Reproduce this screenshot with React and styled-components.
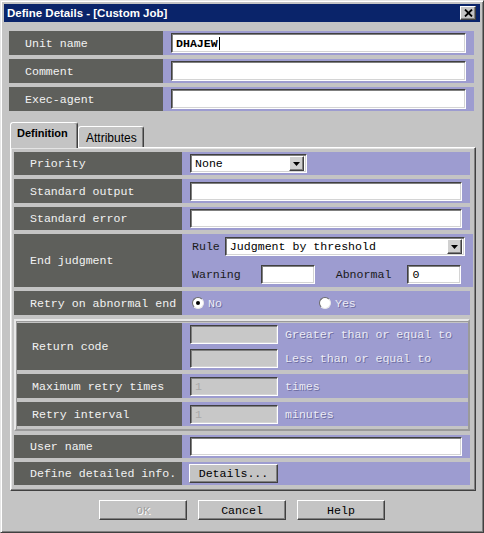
import React from 'react'
import styled, { createGlobalStyle } from 'styled-components'

const GlobalStyle = createGlobalStyle`
  html, body {
    margin: 0;
    padding: 0;
    background: #ffffff;
  }
`

const mono = `"Liberation Mono", "DejaVu Sans Mono", monospace`
const sans = `"Liberation Sans", Arial, sans-serif`

const Window = styled.div`
  width: 484px;
  height: 533px;
  box-sizing: border-box;
  background: #c4c4c4;
  border: 1px solid;
  border-color: #e6e6e6 #404040 #404040 #e6e6e6;
  box-shadow: inset 1px 1px 0 #ffffff, inset -1px -1px 0 #808080;
  padding: 3px;
  display: flex;
  flex-direction: column;
`

const TitleBar = styled.div`
  height: 18px;
  background: #0a246a;
  display: flex;
  align-items: center;
  justify-content: space-between;
  padding: 0 4px 0 3px;
  color: #ffffff;
  font-family: ${sans};
  font-weight: bold;
  font-size: 11.5px;
`

const CloseBox = styled.div`
  width: 16px;
  height: 14px;
  box-sizing: border-box;
  background: #c4c4c4;
  border: 1px solid;
  border-color: #ffffff #404040 #404040 #ffffff;
  box-shadow: inset -1px -1px 0 #808080;
  display: flex;
  align-items: center;
  justify-content: center;
`

const TopRows = styled.div`
  margin: 9px 6px 0 5px;
  display: flex;
  flex-direction: column;
  gap: 4px;
`

const Row = styled.div`
  display: grid;
  grid-template-columns: ${(p) => p.$label}px 1fr;
  height: ${(p) => p.$h || 23}px;
`

const Label = styled.div`
  background: #5e5f5b;
  color: #f2f2f2;
  font-family: ${mono};
  font-size: 11.6px;
  display: flex;
  align-items: center;
  padding-left: ${(p) => p.$pad || 16}px;
  white-space: nowrap;
`

const Value = styled.div`
  background: #9d9cd0;
  display: flex;
  align-items: center;
  padding: 0 8px;
  font-family: ${mono};
  font-size: 11.6px;
  color: #1a1a1a;
`

const Field = styled.div`
  box-sizing: border-box;
  height: ${(p) => p.$h || 19}px;
  width: ${(p) => (p.$w ? `${p.$w}px` : '100%')};
  flex: ${(p) => (p.$w ? 'none' : '1')};
  background: ${(p) => (p.$disabled ? '#c8c8c8' : '#ffffff')};
  border: 1px solid;
  border-color: #404040 #ffffff #ffffff #404040;
  box-shadow: inset 1px 1px 0 #808080, inset -1px -1px 0 #d4d4d4;
  font-family: ${mono};
  font-size: 11.6px;
  font-weight: ${(p) => (p.$bold ? 'bold' : 'normal')};
  color: ${(p) => (p.$disabled ? '#a8a8a8' : '#000000')};
  display: flex;
  align-items: center;
  padding-left: 4px;
  margin-left: ${(p) => p.$ml || 0}px;
  overflow: hidden;
  white-space: nowrap;
`

const Caret = styled.span`
  width: 1px;
  height: 13px;
  background: #000;
  margin-left: 1px;
`

const SelectBox = styled(Field)`
  padding-right: 2px;
  justify-content: space-between;
`

const ArrowBtn = styled.div`
  width: 15px;
  height: 15px;
  box-sizing: border-box;
  background: #d0d0d0;
  border: 1px solid;
  border-color: #ffffff #404040 #404040 #ffffff;
  box-shadow: inset -1px -1px 0 #808080;
  display: flex;
  align-items: center;
  justify-content: center;
`

const Tabs = styled.div`
  margin: 11px 0 0 6px;
  display: flex;
  align-items: flex-end;
  height: 25px;
`

const Tab = styled.div`
  box-sizing: border-box;
  height: ${(p) => (p.$active ? 26 : 21)}px;
  margin-bottom: ${(p) => (p.$active ? -1 : 0)}px;
  width: ${(p) => p.$w}px;
  background: #c4c4c4;
  border: 1px solid;
  border-bottom: none;
  border-color: #ffffff #404040 transparent #ffffff;
  border-radius: 3px 3px 0 0;
  box-shadow: inset -1px 0 0 #808080;
  font-family: ${sans};
  font-size: ${(p) => (p.$active ? 11 : 12)}px;
  font-weight: ${(p) => (p.$active ? 'bold' : 'normal')};
  padding: ${(p) => (p.$active ? '4px 0 0 6px' : '4px 0 0 7px')};
  color: #000;
  position: relative;
  z-index: 1;
`

const Panel = styled.div`
  margin: 0 4px 0 6px;
  box-sizing: border-box;
  border: 1px solid;
  border-color: #ffffff #404040 #404040 #ffffff;
  box-shadow: inset -1px -1px 0 #808080, inset 1px 1px 0 #e4e4e4;
  padding: 4px 5px 5px 3px;
  display: flex;
  flex-direction: column;
  gap: 4px;
`

const Group = styled.div`
  height: 112px;
  box-sizing: border-box;
  border: 2px solid;
  border-color: #e8e8e8 #9a9a9a #9a9a9a #e8e8e8;
  box-shadow: inset 1px 1px 0 #9a9a9a;
  padding: 2px 0 3px 1px;
  display: flex;
  flex-direction: column;
  gap: 4px;
`

const Stack = styled.div`
  flex: 1;
  display: flex;
  flex-direction: column;
  justify-content: center;
  gap: ${(p) => p.$gap || 5}px;
  padding: ${(p) => p.$pad || '0'};
`

const Line = styled.div`
  display: flex;
  align-items: center;
`

const Text = styled.span`
  font-family: ${mono};
  font-size: 11.6px;
  color: #1a1a1a;
  margin-left: ${(p) => p.$ml || 0}px;
  white-space: nowrap;
`

const Faint = styled.span`
  font-family: ${mono};
  font-size: 11.6px;
  color: #ebebf5;
  text-shadow: 1px 1px 0 #6c6ca0;
  margin-left: ${(p) => p.$ml || 0}px;
  white-space: nowrap;
`

const Radio = styled.span`
  width: 12px;
  height: 12px;
  box-sizing: border-box;
  border-radius: 50%;
  background: #ffffff;
  border: 1px solid;
  border-color: #6a6a6a #e8e8e8 #e8e8e8 #6a6a6a;
  display: inline-flex;
  align-items: center;
  justify-content: center;
  margin-left: ${(p) => p.$ml || 0}px;
  &::after {
    content: '';
    width: 4px;
    height: 4px;
    border-radius: 50%;
    background: ${(p) => (p.$on ? '#000' : 'transparent')};
  }
`

const Button = styled.button`
  box-sizing: border-box;
  width: ${(p) => p.$w || 88}px;
  height: ${(p) => p.$h || 20}px;
  background: #c4c4c4;
  border: 1px solid;
  border-color: #ffffff #404040 #404040 #ffffff;
  box-shadow: inset -1px -1px 0 #808080;
  font-family: ${mono};
  font-size: 11.6px;
  color: ${(p) => (p.disabled ? '#a0a0a0' : '#000')};
  text-shadow: ${(p) => (p.disabled ? '1px 1px 0 #ffffff' : 'none')};
  padding: 0;
  margin: 0;
`

const ButtonBar = styled.div`
  margin-top: 9px;
  display: flex;
  justify-content: center;
  gap: 11px;
`

const Select = ({ w, text, ml }) => (
  <SelectBox $w={w} $ml={ml}>
    <span>{text}</span>
    <ArrowBtn>
      <svg width="7" height="4" viewBox="0 0 7 4">
        <path d="M0 0h7L3.5 4z" fill="#000" />
      </svg>
    </ArrowBtn>
  </SelectBox>
)

const topRows = [
  { label: 'Unit name', value: 'DHAJEW' },
  { label: 'Comment', value: '' },
  { label: 'Exec-agent', value: '' },
]

export default function App() {
  return (
    <>
      <GlobalStyle />
      <Window>
        <TitleBar>
          <span>Define Details - [Custom Job]</span>
          <CloseBox>
            <svg width="9" height="8" viewBox="0 0 9 8">
              <path d="M1 0.5l7 7M8 0.5l-7 7" stroke="#000" strokeWidth="1.8" />
            </svg>
          </CloseBox>
        </TitleBar>

        <TopRows>
          {topRows.map((r) => (
            <Row key={r.label} $label={154} $h={24}>
              <Label>{r.label}</Label>
              <Value>
                <Field $h={20} $bold>
                  {r.value}
                  {r.value && <Caret />}
                </Field>
              </Value>
            </Row>
          ))}
        </TopRows>

        <Tabs>
          <Tab $active $w={68}>Definition</Tab>
          <Tab $w={66}>Attributes</Tab>
        </Tabs>

        <Panel>
          <Row $label={168}>
            <Label>Priority</Label>
            <Value>
              <Select w={117} text="None" />
            </Value>
          </Row>
          <Row $label={168} $h={24}>
            <Label>Standard output</Label>
            <Value>
              <Field />
            </Value>
          </Row>
          <Row $label={168}>
            <Label>Standard error</Label>
            <Value>
              <Field />
            </Value>
          </Row>
          <Row $label={168} $h={53}>
            <Label>End judgment</Label>
            <Value>
              <Stack $gap={9} $pad="0 0 0 2px">
                <Line>
                  <Text>Rule</Text>
                  <Select w={240} ml={5} text="Judgment by threshold" />
                </Line>
                <Line>
                  <Text>Warning</Text>
                  <Field $w={54} $ml={20} />
                  <Text $ml={21}>Abnormal</Text>
                  <Field $w={54} $ml={16}>0</Field>
                </Line>
              </Stack>
            </Value>
          </Row>
          <Row $label={168} $h={24}>
            <Label>Retry on abnormal end</Label>
            <Value>
              <Radio $on $ml={2} />
              <Faint $ml={4}>No</Faint>
              <Radio $ml={97} />
              <Faint $ml={4}>Yes</Faint>
            </Value>
          </Row>

          <Group>
            <Row $label={165} $h={47}>
              <Label $pad={15}>Return code</Label>
              <Value>
                <Stack $gap={5}>
                  <Line>
                    <Field $w={88} $disabled />
                    <Faint $ml={7}>Greater than or equal to</Faint>
                  </Line>
                  <Line>
                    <Field $w={88} $disabled />
                    <Faint $ml={7}>Less than or equal to</Faint>
                  </Line>
                </Stack>
              </Value>
            </Row>
            <Row $label={165} $h={24}>
              <Label $pad={15}>Maximum retry times</Label>
              <Value>
                <Field $w={88} $disabled>1</Field>
                <Faint $ml={7}>times</Faint>
              </Value>
            </Row>
            <Row $label={165} $h={24}>
              <Label $pad={15}>Retry interval</Label>
              <Value>
                <Field $w={88} $disabled>1</Field>
                <Faint $ml={7}>minutes</Faint>
              </Value>
            </Row>
          </Group>

          <Row $label={168}>
            <Label>User name</Label>
            <Value>
              <Field />
            </Value>
          </Row>
          <Row $label={168}>
            <Label>Define detailed info.</Label>
            <Value style={{ paddingLeft: 7 }}>
              <Button $w={89} $h={19}>Details...</Button>
            </Value>
          </Row>
        </Panel>

        <ButtonBar>
          <Button disabled>OK</Button>
          <Button>Cancel</Button>
          <Button>Help</Button>
        </ButtonBar>
      </Window>
    </>
  )
}
